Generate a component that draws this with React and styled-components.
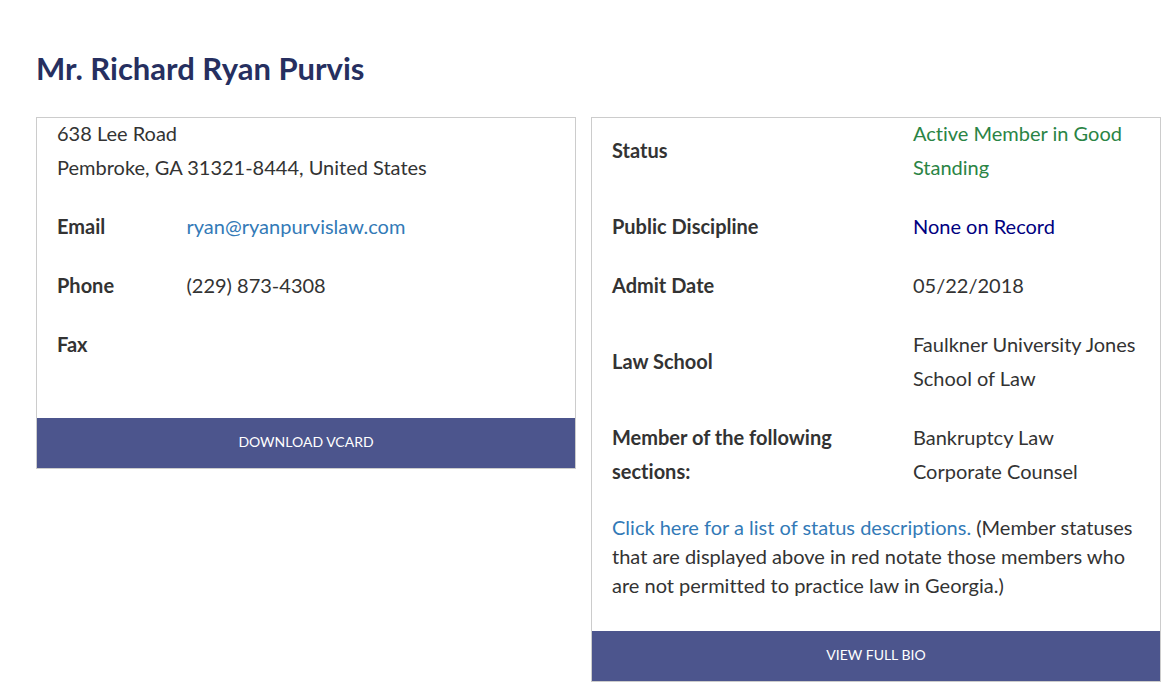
import React from "react";
import styled, { createGlobalStyle } from "styled-components";

const GlobalStyle = createGlobalStyle`
  * { box-sizing: border-box; }
  body {
    margin: 0;
    background: #fff;
    color: #333;
    font-family: Lato, "Liberation Sans", sans-serif;
    font-size: 20px;
    font-variant-ligatures: none;
    line-height: 34px;
  }
`;

const Page = styled.main`
  padding: 46px 10px 14px 36px;
`;

const Name = styled.h1`
  margin: 0 0 27px;
  color: #262f60;
  font-size: 31px;
  font-weight: 700;
  line-height: 44px;
`;

const Columns = styled.div`
  display: grid;
  grid-template-columns: minmax(0, 18fr) minmax(0, 19fr);
  align-items: start;
  gap: 15px;
`;

const Card = styled.section`
  display: flex;
  flex-direction: column;
  border: 1px solid #ccc;
`;

const CardBody = styled.div`
  margin-top: -2px;
  padding: 0 20px ${(p) => p.$bottom}px;
`;

const Address = styled.address`
  margin-bottom: 25px;
  font-style: normal;
`;

const Details = styled.table`
  width: 100%;
  border-collapse: collapse;
  table-layout: fixed;
`;

const Label = styled.th`
  width: ${(p) => p.$width};
  padding: 0 40px 25px 0;
  font-weight: 700;
  text-align: left;
  vertical-align: middle;
`;

const Value = styled.td`
  padding: 0 0 25px;
  color: ${(p) => p.$color || "inherit"};
  vertical-align: middle;
`;

const Link = styled.a`
  color: #337ab7;
  text-decoration: none;
`;

const Note = styled.p`
  margin: 0;
  line-height: 29px;
`;

const CardButton = styled.button`
  height: 50px;
  padding: 0 0 4px;
  border: 0;
  background: #4c558d;
  color: #fff;
  font-family: inherit;
  font-size: 14px;
  text-transform: uppercase;
  cursor: pointer;
`;

function Row({ label, width, color, children }) {
  return (
    <tr>
      <Label scope="row" $width={width}>{label}</Label>
      <Value $color={color}>{children}</Value>
    </tr>
  );
}

export default function App() {
  return (
    <>
      <GlobalStyle />
      <Page>
        <Name>Mr. Richard Ryan Purvis</Name>
        <Columns>
          <Card>
            <CardBody $bottom={32}>
              <Address>
                638 Lee Road
                <br />
                Pembroke, GA 31321-8444, United States
              </Address>
              <Details>
                <tbody>
                  <Row label="Email" width="26%">
                    <Link href="mailto:ryan@ryanpurvislaw.com">ryan@ryanpurvislaw.com</Link>
                  </Row>
                  <Row label="Phone">(229) 873-4308</Row>
                  <Row label="Fax" />
                </tbody>
              </Details>
            </CardBody>
            <CardButton type="button">Download vCard</CardButton>
          </Card>
          <Card>
            <CardBody $bottom={31}>
              <Details>
                <tbody>
                  <Row label="Status" width="57%" color="#2a8445">
                    Active Member in Good Standing
                  </Row>
                  <Row label="Public Discipline" color="#000080">None on Record</Row>
                  <Row label="Admit Date">05/22/2018</Row>
                  <Row label="Law School">Faulkner University Jones School of Law</Row>
                  <Row label="Member of the following sections:">
                    Bankruptcy Law
                    <br />
                    Corporate Counsel
                  </Row>
                </tbody>
              </Details>
              <Note>
                <Link href="#status-descriptions">Click here for a list of status descriptions.</Link>{" "}
                (Member statuses that are displayed above in red notate those members who are not
                permitted to practice law in Georgia.)
              </Note>
            </CardBody>
            <CardButton type="button">View Full Bio</CardButton>
          </Card>
        </Columns>
      </Page>
    </>
  );
}
